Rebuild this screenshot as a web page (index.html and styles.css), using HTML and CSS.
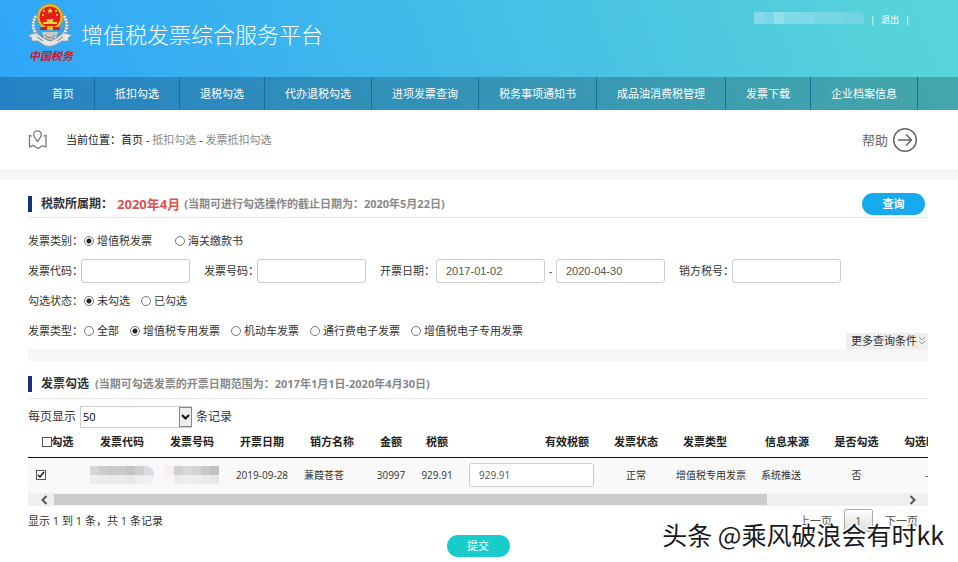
FILE: index.html
```html
<!DOCTYPE html>
<html lang="zh-CN">
<head>
<meta charset="utf-8">
<title>增值税发票综合服务平台</title>
<link rel="stylesheet" href="styles.css">
</head>
<body>
<header class="header">
  <div class="brand-row">
    <svg class="emblem" width="46" height="62" viewBox="0 0 46 62" aria-hidden="true">
      <g fill="none" stroke="#7c8a94" stroke-width="5" stroke-dasharray="2 1">
        <path d="M9 14C3 23 7 34 18 38"/>
        <path d="M37 14C43 23 39 34 28 38"/>
      </g>
      <g fill="none" stroke="#eef0f0" stroke-width="3" stroke-dasharray="2 1">
        <path d="M9 14C3 23 7 34 18 38"/>
        <path d="M37 14C43 23 39 34 28 38"/>
      </g>
      <path d="M1 33l8-2 7 5q7 4 14 0l7-5 8 2-4 3 1 3-7 0-7 4q-6 3-11 0l-6-4-7 0 1-3z" fill="#e4e5e4" stroke="#8c9498" stroke-width=".7"/>
      <path d="M15 30h16l-2 6q-6 5-12 0z" fill="#c9c9c6"/>
      <path d="M18 33q5 6 10 0M18 36q5 5 10 0M10 35l6 4M36 35l-6 4" fill="none" stroke="#777b7c"/>
      <circle cx="23" cy="15" r="13" fill="#e8b92e" stroke="#c38a17" stroke-width=".6"/>
      <circle cx="23" cy="15" r="10.500" fill="#e41d16"/>
      <path d="M23 6l.9 2h2l-1.600 1.300.6 2-1.900-1.200-1.900 1.200.6-2L20.100 8h2z" fill="#ffe34b"/>
      <g fill="#ffe34b"><circle cx="17" cy="9" r="1"/><circle cx="29" cy="9" r="1"/><circle cx="16" cy="13" r="1"/><circle cx="30" cy="13" r="1"/></g>
      <path d="M20 17h6l1 1h-1v2h4v2H16v-2h4v-2h-1z" fill="#f6cf3c"/>
      <path d="M14 25h18l1 3H13z" fill="#d91b16"/>
      <path d="M20 24h6v4h-6z" fill="#e8b92e"/>
      <text class="emblem-text" x="2" y="58">中国税务</text>
    </svg>
    <h1 class="brand">增值税发票综合服务平台</h1>
    <div class="account">
      <span class="account-mask"></span>
      <span class="sep">|</span>
      <a href="#">退出</a>
      <span class="sep">|</span>
    </div>
  </div>
  <nav class="nav">
    <a href="#">首页</a>
    <a href="#">抵扣勾选</a>
    <a href="#">退税勾选</a>
    <a href="#">代办退税勾选</a>
    <a href="#">进项发票查询</a>
    <a href="#">税务事项通知书</a>
    <a href="#">成品油消费税管理</a>
    <a href="#">发票下载</a>
    <a href="#">企业档案信息</a>
  </nav>
</header>

<div class="crumbs">
  <svg width="20" height="20" viewBox="0 0 20 20" fill="none" stroke="#777" stroke-width="1.300" stroke-linejoin="round" stroke-linecap="round" aria-hidden="true">
    <path d="M9.500 11.500C7 8.500 5.700 6.700 5.700 4.600a3.800 3.800 0 0 1 7.600 0c0 2.100-1.300 3.900-3.800 6.900z"/>
    <path d="M3.300 6L1.500 5.300V17l3.500-1.700 4 2.700q1 .5 2 0l3.500-2.200 3.500 1.200V5.300L16 6"/>
  </svg>
  <p class="path">当前位置：<a class="here" href="#">首页</a> - <a href="#">抵扣勾选</a> - <a href="#">发票抵扣勾选</a></p>
  <a class="help" href="#">帮助
    <svg width="26" height="26" viewBox="0 0 26 26" fill="none" stroke="#666" stroke-width="1.500" aria-hidden="true">
      <circle cx="13" cy="13" r="11.300"/>
      <path d="M6 13h13M14 7.500l5.500 5.500-5.500 5.500"/>
    </svg>
  </a>
</div>

<main class="main">
  <form class="search">
    <div class="title">
      <h2>税款所属期：</h2>
      <strong class="period">2020年4月</strong>
      <span class="note">(当期可进行勾选操作的截止日期为：2020年5月22日)</span>
      <button class="btn query" type="submit">查询</button>
    </div>
    <div class="rows">
      <div class="row wide" role="radiogroup" aria-labelledby="kind">
        <span class="caption" id="kind">发票类别：</span>
        <label><input type="radio" name="kind" checked>增值税发票</label>
        <label><input type="radio" name="kind">海关缴款书</label>
      </div>
      <div class="row fields">
        <label for="code">发票代码：</label><input id="code" type="text">
        <label for="number">发票号码：</label><input id="number" type="text">
        <label class="date-label" for="from">开票日期：</label><input id="from" type="text" value="2017-01-02"><span class="dash">-</span><input type="text" value="2020-04-30" aria-label="开票日期止">
        <label for="seller">销方税号：</label><input id="seller" type="text">
      </div>
      <div class="row" role="radiogroup" aria-labelledby="state">
        <span class="caption" id="state">勾选状态：</span>
        <label><input type="radio" name="state" checked>未勾选</label>
        <label><input type="radio" name="state">已勾选</label>
      </div>
      <div class="row" role="radiogroup" aria-labelledby="type">
        <span class="caption" id="type">发票类型：</span>
        <label><input type="radio" name="type">全部</label>
        <label><input type="radio" name="type" checked>增值税专用发票</label>
        <label><input type="radio" name="type">机动车发票</label>
        <label><input type="radio" name="type">通行费电子发票</label>
        <label><input type="radio" name="type">增值税电子专用发票</label>
      </div>
      <button class="more" type="button">更多查询条件<svg width="8" height="10" viewBox="0 0 8 10" fill="none" stroke="#999" aria-hidden="true"><path d="M1 1l3 3 3-3M1 5l3 3 3-3"/></svg></button>
    </div>
  </form>

  <section class="result">
    <div class="title">
      <h2>发票勾选</h2>
      <span class="note">(当期可勾选发票的开票日期范围为：2017年1月1日-2020年4月30日)</span>
    </div>
    <div class="length">
      <label for="size">每页显示</label>
      <span class="select"><select id="size"><option>50</option></select><svg width="13" height="20" viewBox="0 0 13 20" aria-hidden="true"><rect x=".5" y=".5" width="12" height="19" fill="#eee" stroke="#888"/><path d="M3 8l3.500 3.500L10 8" fill="none" stroke="#111" stroke-width="2"/></svg></span>
      <span>条记录</span>
    </div>
    <div class="table-wrap">
      <table>
        <colgroup>
          <col class="c-check"><col class="c-id"><col class="c-id"><col class="c-id"><col class="c-id"><col class="c-amount"><col class="c-tax"><col class="c-valid"><col class="c-state"><col class="c-type"><col class="c-source"><col class="c-done"><col class="c-time">
        </colgroup>
        <thead>
          <tr>
            <th><label class="all"><input type="checkbox">勾选</label></th>
            <th>发票代码</th><th>发票号码</th><th>开票日期</th><th>销方名称</th><th>金额</th><th>税额</th>
            <th class="valid">有效税额</th><th>发票状态</th><th class="type">发票类型</th><th>信息来源</th><th>是否勾选</th><th class="time">勾选时间</th>
          </tr>
        </thead>
        <tbody>
          <tr>
            <td class="pick"><input type="checkbox" checked aria-label="勾选发票"></td>
            <td><span class="mask"></span></td>
            <td><span class="mask short"></span></td>
            <td>2019-09-28</td>
            <td class="left">蒹葭苍苍</td>
            <td>30997</td>
            <td>929.91</td>
            <td class="edit"><input type="text" value="929.91" aria-label="有效税额"></td>
            <td>正常</td>
            <td>增值税专用发票</td>
            <td class="left">系统推送</td>
            <td>否</td>
            <td>-</td>
          </tr>
        </tbody>
      </table>
    </div>
    <div class="scroll" aria-hidden="true">
      <svg width="8" height="10" viewBox="0 0 8 10" fill="none" stroke="#555" stroke-width="2"><path d="M6.500 1l-4 4 4 4"/></svg>
      <span class="track"><span class="thumb"></span></span>
      <svg width="8" height="10" viewBox="0 0 8 10" fill="none" stroke="#555" stroke-width="2"><path d="M1.500 1l4 4-4 4"/></svg>
    </div>
    <div class="foot">
      <p>显示 1 到 1 条，共 1 条记录</p>
      <div class="pager"><a href="#">上一页</a><a class="current" href="#">1</a><a href="#">下一页</a></div>
    </div>
    <button class="btn submit" type="button">提交</button>
  </section>
</main>
<div class="watermark">头条 @乘风破浪会有时kk</div>
</body>
</html>
```

FILE: styles.css
```css
* { box-sizing: border-box; }
body {
  margin: 0;
  position: relative;
  background: #fff;
  color: #333;
  font: 11px/16px "Open Sans", "Noto Sans CJK SC", sans-serif;
}
h1, h2, p { margin: 0; }
a { color: inherit; text-decoration: none; }
input, select, button { margin: 0; font: inherit; color: inherit; }
svg { display: block; flex: none; }

/* header */
.header { background: linear-gradient(70deg, #2fa6fa 0%, #3fb8ea 40%, #56d2da 92%, #58d4dc 100%); color: #fff; }
.brand-row { display: flex; height: 77px; padding: 2px 48px 0 27px; }
.emblem-text { font: italic bold 11px "Noto Sans CJK SC", sans-serif; fill: #dc1414; }
.brand { margin: 16px 0 0 8px; font-size: 22px; line-height: 32px; font-weight: 300; white-space: nowrap; }
.account { display: flex; align-items: center; gap: 6px; height: 16px; margin: 10px 0 0 auto; font-size: 9px; }
.account-mask {
  width: 110px; height: 12px; margin-top: -4px; border-radius: 0 6px 0 0;
  background: linear-gradient(90deg, #86d9ec 0 10px, #7bd5e8 10px 20px, #93e0ed 20px 30px, #80d9e8 30px 60px, #78d6e5 60px 90px, #72d4e3 90px);
}
.nav { display: flex; height: 33px; padding-left: 32px; background: rgba(0, 0, 0, .21); line-height: 33px; }
.nav a { padding: 0 20px; border-right: 1px solid #1b6c9e; white-space: nowrap; }

/* location bar */
.crumbs { display: flex; align-items: center; height: 59px; padding: 0 40px 0 28px; }
.path { margin-left: 18px; color: #222; }
.path a { color: #888; }
.path .here { color: #222; }
.help { display: flex; align-items: center; gap: 4px; margin-left: auto; font-size: 13px; color: #666; }

/* sections */
.main { padding: 0 30px 0 28px; border-top: 11px solid #f6f6f6; }
.title { display: flex; align-items: center; height: 38px; padding-top: 9px; border-bottom: 1px solid #e8e8e8; white-space: nowrap; }
.search .title { padding-top: 11px; }
.title h2 { padding-left: 9px; border-left: 4px solid #16307c; font-size: 12px; line-height: 16px; }
.period { margin: 0 4px; font-size: 13px; color: #d9534f; }
.note { font-weight: bold; color: #888; }
.result .note { margin-left: 6px; }
.btn { width: 63px; height: 22px; padding: 0; border: 0; border-radius: 11px; color: #fff; }
.query { margin: 0 3px 0 auto; background: #17aaee; font-weight: bold; }

/* search form */
.rows { position: relative; padding: 8px 0 3px; }
.row { display: flex; align-items: center; gap: 11px; height: 30px; white-space: nowrap; }
.row.wide { gap: 23px; }
.caption { width: 56px; margin-right: -11px; }
.wide .caption { margin-right: -23px; }
.row label { display: flex; align-items: center; gap: 3px; }
input[type="radio"] { appearance: none; width: 10px; height: 10px; border: 1px solid #777; border-radius: 50%; background: #fff; }
input[type="radio"]:checked { background: radial-gradient(circle, #222 0 2px, #fff 3px); }
.row.fields { gap: 0; }
.fields label { width: 53px; }
.fields .date-label { width: 56px; }
.fields input + label { margin-left: 14px; }
input[type="text"] {
  width: 109px; height: 24px; padding: 0 9px; border: 1px solid #ccc; border-radius: 3px;
  background: #fff; color: #555; font-family: "Liberation Sans", sans-serif;
}
.dash { width: 11px; text-align: center; }
.more {
  position: absolute; right: 0; bottom: 0; display: flex; align-items: center; gap: 1px;
  height: 16px; padding: 0 2px 0 5px; border: 0; background: #eee;
}
.result { border-top: 12px solid #f6f6f6; }

/* invoice table */
.length { display: flex; align-items: center; gap: 4px; height: 34px; padding-top: 2px; font-size: 12px; }
.select { position: relative; }
.select select { display: block; appearance: none; width: 112px; height: 22px; padding: 0 2px; border: 1px solid #ccc; border-radius: 0; background: #fff; font-size: 11px; color: #000; }
.select svg { position: absolute; right: 0; top: 1px; pointer-events: none; }
.table-wrap { overflow: hidden; }
table { width: 932px; table-layout: fixed; border-collapse: collapse; }
.c-check { width: 59px; }
.c-id { width: 70px; }
.c-amount { width: 48px; }
.c-tax { width: 44px; }
.c-valid { width: 145px; }
.c-state { width: 64px; }
.c-type { width: 86px; }
.c-source { width: 66px; }
.c-done { width: 73px; }
.c-time { width: 67px; }
th, td { padding: 0; text-align: center; white-space: nowrap; }
th { height: 24px; padding-bottom: 6px; border-bottom: 1px solid #111; color: #222; }
th.valid { text-align: right; padding-right: 15px; }
th.type { padding-right: 12px; }
th.time { text-align: left; padding-left: 11px; }
td { height: 36px; background: #f9f9f9; font-size: 10px; }
.all { display: flex; align-items: center; justify-content: center; }
input[type="checkbox"] { appearance: none; display: block; width: 10px; height: 10px; border: 1px solid #555; background: #fff; }
input[type="checkbox"]:checked { background: #fff url("data:image/svg+xml,%3Csvg xmlns='http://www.w3.org/2000/svg' viewBox='0 0 8 8'%3E%3Cpath d='M1 4l2 2 4-5' fill='none' stroke='%23111' stroke-width='1.500'/%3E%3C/svg%3E"); }
td.pick { padding-left: 8px; }
td.left { text-align: left; padding-left: 7px; }
.edit input[type="text"] { width: 125px; font-family: inherit; }
.mask {
  display: block; width: 64px; height: 18px; margin: 0 auto; border-radius: 0 8px 8px 0;
  background:
    linear-gradient(#f9f9f900 0 9px, #f9f9f9b0 9px),
    linear-gradient(90deg, #d6d6d6 0 9px, #cdcdcd 9px 18px, #c8c8c8 18px 27px, #cbcacb 27px 36px, #c4c3c3 36px 45px, #cecece 45px 54px, #dadce3 54px);
}
.mask.short {
  width: 54px;
  background:
    linear-gradient(#f9f9f900 0 9px, #f9f9f9b0 9px),
    linear-gradient(90deg, #f6f1ec 0 9px, #d0d0d3 9px 18px, #d7d9dc 18px 27px, #d2d2d4 27px 36px, #c9c8c8 36px 45px, #c0c0c2 45px);
  border-radius: 0;
}
.scroll { display: flex; align-items: center; gap: 6px; height: 13px; padding: 0 11px 0 12px; background: #efefef; }
.track { flex: 1; }
.thumb { display: block; width: 84%; height: 11px; background: #cbcbcb; }
.foot { display: flex; justify-content: space-between; align-items: center; height: 29px; }
.pager { display: flex; align-items: center; gap: 12px; padding-right: 10px; color: #555; }
.pager .current { width: 29px; height: 23px; border: 1px solid #aaa; border-radius: 2px; background: linear-gradient(#fff, #ddd); line-height: 22px; text-align: center; }
.submit { display: block; margin: 0 auto; background: #18cccc; }

.watermark {
  position: absolute; right: 14px; bottom: 5px; white-space: nowrap;
  font: 25px/36px "Noto Sans CJK SC", sans-serif; color: #1a1a1a;
  text-shadow: -1px -1px 0 #fff, 1px -1px 0 #fff, -1px 1px 0 #fff, 1px 1px 0 #fff;
}
```
